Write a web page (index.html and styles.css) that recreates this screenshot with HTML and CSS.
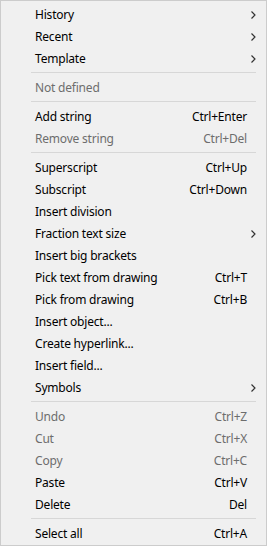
FILE: index.html
```html
<!DOCTYPE html>
<html>
<head>
<meta charset="utf-8">
<link rel="stylesheet" href="styles.css">
</head>
<body>
<div class="menu">
  <div class="item"><span class="label">History</span><span class="key"></span><span class="sub"><svg width="5" height="8" viewBox="0 0 5 8"><path d="M0.5 0.5 L4 4 L0.5 7.5" fill="none" stroke="#333" stroke-width="1.2"/></svg></span></div>
  <div class="item"><span class="label">Recent</span><span class="key"></span><span class="sub"><svg width="5" height="8" viewBox="0 0 5 8"><path d="M0.5 0.5 L4 4 L0.5 7.5" fill="none" stroke="#333" stroke-width="1.2"/></svg></span></div>
  <div class="item"><span class="label">Template</span><span class="key"></span><span class="sub"><svg width="5" height="8" viewBox="0 0 5 8"><path d="M0.5 0.5 L4 4 L0.5 7.5" fill="none" stroke="#333" stroke-width="1.2"/></svg></span></div>
  <div class="sep"></div>
  <div class="item disabled"><span class="label">Not defined</span><span class="key"></span><span class="sub"></span></div>
  <div class="sep"></div>
  <div class="item"><span class="label">Add string</span><span class="key">Ctrl+Enter</span><span class="sub"></span></div>
  <div class="item disabled"><span class="label">Remove string</span><span class="key">Ctrl+Del</span><span class="sub"></span></div>
  <div class="sep"></div>
  <div class="item"><span class="label">Superscript</span><span class="key">Ctrl+Up</span><span class="sub"></span></div>
  <div class="item"><span class="label">Subscript</span><span class="key">Ctrl+Down</span><span class="sub"></span></div>
  <div class="item"><span class="label">Insert division</span><span class="key"></span><span class="sub"></span></div>
  <div class="item"><span class="label">Fraction text size</span><span class="key"></span><span class="sub"><svg width="5" height="8" viewBox="0 0 5 8"><path d="M0.5 0.5 L4 4 L0.5 7.5" fill="none" stroke="#333" stroke-width="1.2"/></svg></span></div>
  <div class="item"><span class="label">Insert big brackets</span><span class="key"></span><span class="sub"></span></div>
  <div class="item"><span class="label">Pick text from drawing</span><span class="key">Ctrl+T</span><span class="sub"></span></div>
  <div class="item"><span class="label">Pick from drawing</span><span class="key">Ctrl+B</span><span class="sub"></span></div>
  <div class="item"><span class="label">Insert object...</span><span class="key"></span><span class="sub"></span></div>
  <div class="item"><span class="label">Create hyperlink...</span><span class="key"></span><span class="sub"></span></div>
  <div class="item"><span class="label">Insert field...</span><span class="key"></span><span class="sub"></span></div>
  <div class="item"><span class="label">Symbols</span><span class="key"></span><span class="sub"><svg width="5" height="8" viewBox="0 0 5 8"><path d="M0.5 0.5 L4 4 L0.5 7.5" fill="none" stroke="#333" stroke-width="1.2"/></svg></span></div>
  <div class="sep"></div>
  <div class="item disabled"><span class="label">Undo</span><span class="key">Ctrl+Z</span><span class="sub"></span></div>
  <div class="item disabled"><span class="label">Cut</span><span class="key">Ctrl+X</span><span class="sub"></span></div>
  <div class="item disabled"><span class="label">Copy</span><span class="key">Ctrl+C</span><span class="sub"></span></div>
  <div class="item"><span class="label">Paste</span><span class="key">Ctrl+V</span><span class="sub"></span></div>
  <div class="item"><span class="label">Delete</span><span class="key">Del</span><span class="sub"></span></div>
  <div class="sep"></div>
  <div class="item"><span class="label">Select all</span><span class="key">Ctrl+A</span><span class="sub"></span></div>
</div>
</body>
</html>
```
FILE: styles.css
```css
html, body {
  margin: 0;
  padding: 0;
  background: #f0f0f0;
}
.menu {
  width: 267px;
  height: 546px;
  box-sizing: border-box;
  border: 1px solid #cccccc;
  background: #f0f0f0;
  padding: 2px 0 1px 0;
  font-family: "Noto Sans", "Open Sans", sans-serif;
  font-size: 12px;
  letter-spacing: -0.2px;
  color: #000;
}
.item {
  display: grid;
  grid-template-columns: 1fr auto 19px;
  box-sizing: border-box;
  height: 22px;
  padding-top: 2px;
  line-height: 20px;
  padding-left: 34px;
  white-space: nowrap;
}
.item.disabled {
  color: #6d6d6d;
}
.key {
  text-align: right;
}
.sub {
  display: flex;
  align-items: center;
  padding-left: 4px;
}
.sub svg {
  display: block;
}
.sep {
  height: 1px;
  background: #d7d7d7;
  margin: 3px 10px 3px 30px;
}
```
